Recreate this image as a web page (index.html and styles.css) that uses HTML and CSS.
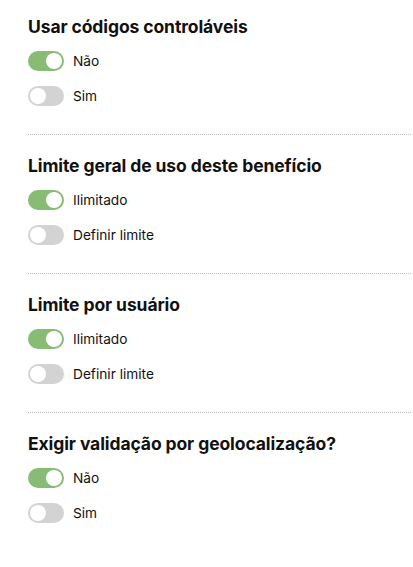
FILE: index.html
```html
<!DOCTYPE html>
<html lang="pt-BR">
<head>
<meta charset="utf-8">
<link rel="stylesheet" href="styles.css">
</head>
<body>
<main class="form">
  <section class="group">
    <h2 class="group-title">Usar códigos controláveis</h2>
    <div class="options">
      <label class="option"><span class="switch on"><span class="knob"></span></span><span class="option-label">Não</span></label>
      <label class="option"><span class="switch"><span class="knob"></span></span><span class="option-label">Sim</span></label>
    </div>
  </section>
  <section class="group">
    <h2 class="group-title">Limite geral de uso deste benefício</h2>
    <div class="options">
      <label class="option"><span class="switch on"><span class="knob"></span></span><span class="option-label">Ilimitado</span></label>
      <label class="option"><span class="switch"><span class="knob"></span></span><span class="option-label">Definir limite</span></label>
    </div>
  </section>
  <section class="group">
    <h2 class="group-title">Limite por usuário</h2>
    <div class="options">
      <label class="option"><span class="switch on"><span class="knob"></span></span><span class="option-label">Ilimitado</span></label>
      <label class="option"><span class="switch"><span class="knob"></span></span><span class="option-label">Definir limite</span></label>
    </div>
  </section>
  <section class="group">
    <h2 class="group-title">Exigir validação por geolocalização?</h2>
    <div class="options">
      <label class="option"><span class="switch on"><span class="knob"></span></span><span class="option-label">Não</span></label>
      <label class="option"><span class="switch"><span class="knob"></span></span><span class="option-label">Sim</span></label>
    </div>
  </section>
</main>
</body>
</html>
```
FILE: styles.css
```css
html, body {
  margin: 0;
  padding: 0;
  background: #ffffff;
}
body {
  font-family: Inter, "Liberation Sans", sans-serif;
  color: #111111;
}
.form {
  display: flex;
  flex-direction: column;
  padding: 16px 2px 0 28px;
}
.group {
  display: flex;
  flex-direction: column;
  gap: 13px;
  padding-bottom: 28px;
  border-bottom: 1px dotted #bdbdbd;
}
.group + .group {
  padding-top: 20px;
}
.group:last-child {
  border-bottom: none;
}
.group-title {
  margin: 0;
  font-size: 17.5px;
  line-height: 22px;
  font-weight: 700;
  letter-spacing: -0.1px;
}
.options {
  display: flex;
  flex-direction: column;
  gap: 15px;
}
.option {
  display: flex;
  align-items: center;
  gap: 9px;
  height: 20px;
}
.switch {
  position: relative;
  width: 36px;
  height: 20px;
  border-radius: 10px;
  background: #d3d3d3;
  flex-shrink: 0;
}
.switch.on {
  background: #88bb74;
}
.knob {
  position: absolute;
  top: 2px;
  left: 2px;
  width: 16px;
  height: 16px;
  border-radius: 50%;
  background: #ffffff;
}
.switch.on .knob {
  left: 18px;
}
.option-label {
  font-size: 13.7px;
  line-height: 20px;
}
```
